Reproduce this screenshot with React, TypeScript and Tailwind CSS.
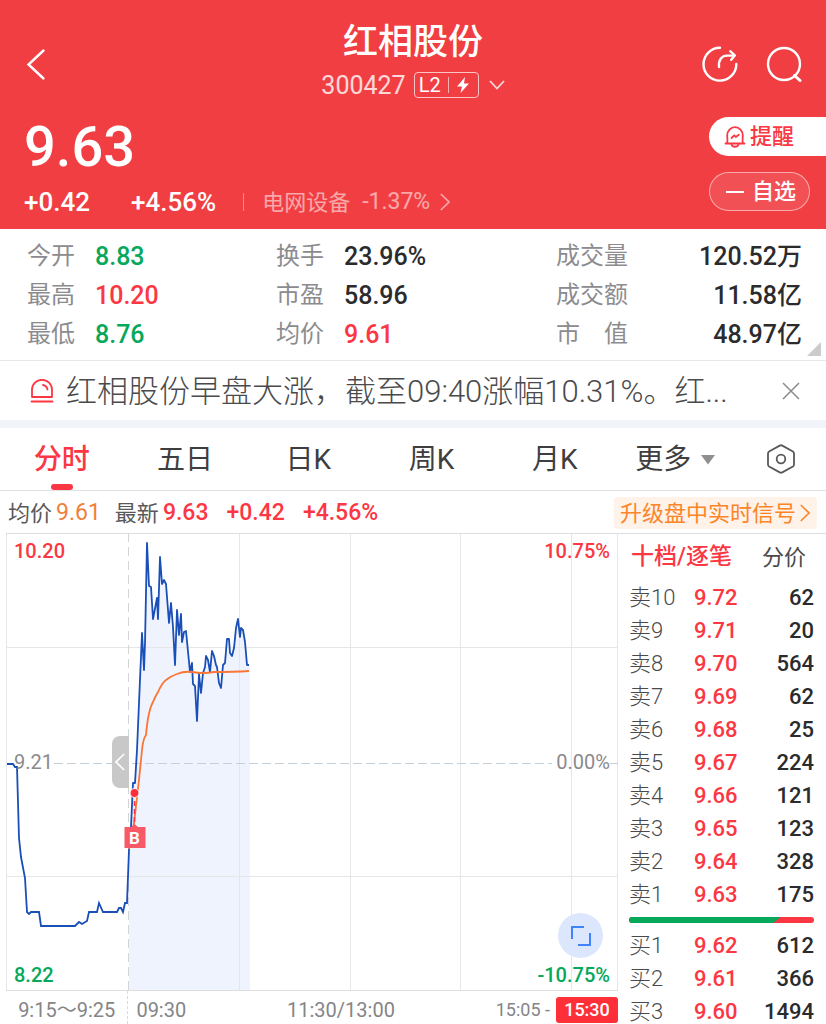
import clsx from "clsx";

const RED = "text-[#fb3744]";
const GREEN = "text-[#06a85b]";
const DARK = "text-[#2b2b2d]";

const stats = [
  [
    { label: "今开", value: "8.83", color: GREEN },
    { label: "最高", value: "10.20", color: RED },
    { label: "最低", value: "8.76", color: GREEN },
  ],
  [
    { label: "换手", value: "23.96%", color: DARK },
    { label: "市盈", value: "58.96", color: DARK },
    { label: "均价", value: "9.61", color: RED },
  ],
  [
    { label: "成交量", value: "120.52万", color: DARK },
    { label: "成交额", value: "11.58亿", color: DARK },
    { label: "市　值", value: "48.97亿", color: DARK },
  ],
];

const tabs = ["分时", "五日", "日K", "周K", "月K"];

const sells = [
  ["卖10", "9.72", "62"],
  ["卖9", "9.71", "20"],
  ["卖8", "9.70", "564"],
  ["卖7", "9.69", "62"],
  ["卖6", "9.68", "25"],
  ["卖5", "9.67", "224"],
  ["卖4", "9.66", "121"],
  ["卖3", "9.65", "123"],
  ["卖2", "9.64", "328"],
  ["卖1", "9.63", "175"],
];

const buys = [
  ["买1", "9.62", "612"],
  ["买2", "9.61", "366"],
  ["买3", "9.60", "1494"],
];

// Call auction, 9:15 - 9:25
const auction =
  "1,231 7,231 9,234 11,234 13,305 15,324 19,345 21,379 23,381 25,379 33,379 35,393 69,393 73,389 76,391 81,388 83,379 91,379 93,370 97,379 111,379 113,375 115,375 117,379 119,370 121,370 123,317";

// Continuous trading from 9:30
const session =
  "123,317 125,294 127,250 129,250 131,217 136,100 138,137 139,110 141,10 143,53 145,54 147,86 151,65 152,86 154,24 156,51 158,47 160,51 163,90 165,70 167,94 169,132 171,77 173,102 175,81 176,109 178,99 180,98 184,139 186,130 187,151 189,153 191,188 193,141 195,160 197,140 199,134 200,123 202,127 204,139 206,118 208,123 210,132 211,134 213,150 215,155 217,132 219,130 221,106 223,106 224,120 226,123 228,115 230,95 232,86 234,104 235,95 237,97 239,109 241,132 243,132";

const average =
  "M123 316 L128 290 L133 247 L136 217 Q137 206 140 202 Q142 178 147 169 Q149 164 152 159 Q156 150 160 147 Q165 143 171 141 Q178 138 186 139 Q197 141 208 139 Q228 139 243 138";

function Arrow({ className }: { className?: string }) {
  return (
    <svg viewBox="0 0 10 18" className={clsx("h-[18px] w-[10px]", className)} fill="none" stroke="currentColor" strokeWidth="1.6">
      <path d="M0.8 1 L9 9 L0.8 17" />
    </svg>
  );
}

function Header() {
  return (
    <header className="bg-[#f03e42] pb-3 text-white">
      <div className="grid grid-cols-[1fr_auto_1fr] items-center px-6 pt-[18px]">
        <button type="button" aria-label="返回" className="justify-self-start pt-3">
          <svg viewBox="0 0 24 36" className="h-9 w-6" fill="none" stroke="currentColor" strokeWidth="2.4" strokeLinecap="round">
            <path d="M19.5 4.5 L4.5 18.5 L19.5 32.5" />
          </svg>
        </button>
        <div className="flex flex-col items-center">
          <h1 className="text-[35px] leading-[50px] font-medium">红相股份</h1>
          <div className="mt-1 flex h-[26px] items-center">
            <span className="pt-[2px] text-[25px] text-white/80">300427</span>
            <span className="ml-2 flex h-[26px] items-center rounded-[4px] border border-white/70 px-1 text-[20px] leading-none">
              L2
              <span className="mx-[7px] h-4 w-px bg-white/60" />
              <svg viewBox="0 0 14 18" className="mr-1 h-[18px] w-[14px]" fill="currentColor">
                <path d="M9 1 L1 10.5 H6 L4.5 17 L13 7.5 H8 Z" />
              </svg>
            </span>
            <svg viewBox="0 0 16 10" className="ml-[10px] h-[10px] w-4" fill="none" stroke="currentColor" strokeOpacity="0.8" strokeWidth="1.8">
              <path d="M1 1 L8 8.5 L15 1" />
            </svg>
          </div>
        </div>
        <div className="flex gap-7 justify-self-end pt-3">
          <button type="button" aria-label="分享">
            <svg viewBox="0 0 36 36" className="h-9 w-9" fill="none" stroke="currentColor" strokeWidth="2.4" strokeLinecap="round" strokeLinejoin="round">
              <path d="M18 1.8 A16.4 16.4 0 1 0 34.3 18" />
              <path d="M17 21 C16.3 13.5 20 9.6 25 9.6 H32" />
              <path d="M28.2 5.2 L32.8 9.4 L29.2 13.8" />
            </svg>
          </button>
          <button type="button" aria-label="搜索">
            <svg viewBox="0 0 36 36" className="h-9 w-9" fill="none" stroke="currentColor" strokeWidth="2.4" strokeLinecap="round">
              <circle cx="18" cy="18" r="16" />
              <path d="M28.5 29.5 L34 34.5" strokeWidth="3" />
            </svg>
          </button>
        </div>
      </div>

      <div className="mt-[19px] flex justify-between">
        <div className="pl-6">
          <p className="text-[56px] leading-[60px] font-medium">9.63</p>
          <div className="mt-[10px] flex h-[30px] items-center text-[26px]">
            <span className="font-medium">+0.42</span>
            <span className="ml-[41px] font-medium">+4.56%</span>
            <span className="ml-[27px] h-[18px] w-px bg-white/40" />
            <a href="#sector" className="ml-[18px] flex items-center text-[22px] text-white/55">
              电网设备
              <span className="ml-3 text-[23px]">-1.37%</span>
              <Arrow className="ml-[10px]" />
            </a>
          </div>
        </div>
        <div className="flex flex-col gap-4">
          <button type="button" className={clsx("flex h-[39px] items-center rounded-l-full bg-white pr-[31px] pl-[15px] text-[22px] font-medium", RED)}>
            <svg viewBox="0 0 22 22" className="mr-1 h-[22px] w-[22px]" fill="none" stroke="currentColor" strokeWidth="1.8" strokeLinecap="round" strokeLinejoin="round">
              <path d="M1.5 17.5 H20.5" />
              <path d="M3 17 C4 15.5 3.2 12 3.2 9.5 A7.8 8.3 0 0 1 18.8 9.5 C18.8 12 18 15.5 19 17" />
              <path d="M7.5 18.5 C8.5 21.5 13.5 21.5 14.5 18.5" />
              <path d="M7.5 12 L10.3 9.3 L11.8 11 L14.8 8.8" />
            </svg>
            提醒
          </button>
          <button type="button" className="mr-4 flex h-[39px] items-center rounded-full border border-white/50 bg-white/10 px-[13px] text-[22px] font-medium">
            <span className="mr-2 ml-[3px] h-[2px] w-[18px] bg-white" />
            自选
          </button>
        </div>
      </div>
    </header>
  );
}

function Stats() {
  return (
    <section className="relative grid grid-cols-[249fr_280fr_246fr] border-b border-[#e8e8ea] py-[7px] pr-6 pl-[27px]">
      {stats.map((column, i) => (
        <dl key={column[0].label}>
          {column.map((item) => (
            <div key={item.label} className={clsx("flex h-[39px] items-center", i === 2 && "justify-between")}>
              <dt className={clsx("text-[24px] text-[#8c8c8f]", i < 2 && "mr-5")}>{item.label}</dt>
              <dd className={clsx("pt-[2px] text-[25px] font-medium", item.color)}>{item.value}</dd>
            </div>
          ))}
        </dl>
      ))}
      <svg viewBox="0 0 14 14" className="absolute right-[5px] bottom-1 h-[14px] w-[14px]" fill="#cbcbcd">
        <path d="M14 0 V14 H0 Z" />
      </svg>
    </section>
  );
}

function News() {
  return (
    <section className="flex h-[59px] shrink-0 items-center pr-[26px] pl-[30px]">
      <svg viewBox="0 0 24 24" className="h-6 w-6 shrink-0" fill="none" stroke="#fb3744" strokeWidth="1.8" strokeLinecap="round">
        <path d="M2 18 V10.5 A9.8 9.5 0 0 1 22 10.5 V18 Z" strokeLinejoin="round" />
        <path d="M1.5 22.5 H22.5" />
        <path d="M13 6 C15.5 6.5 17 8 17.5 10.5" />
      </svg>
      <p className="ml-3 min-w-0 flex-1 truncate pt-1 text-[31px] font-light text-[#4a4a4c]">
        红相股份早盘大涨，截至09:40涨幅10.31%。红...
      </p>
      <button type="button" aria-label="关闭">
        <svg viewBox="0 0 18 18" className="h-[18px] w-[18px]" fill="none" stroke="#8a8a8c" strokeWidth="1.5">
          <path d="M1 1 L17 17 M17 1 L1 17" />
        </svg>
      </button>
    </section>
  );
}

function Tabs() {
  return (
    <nav className="grid h-[63px] shrink-0 grid-cols-[repeat(6,3fr)_2fr] border-b border-[#e2e2e4] pr-1 text-[28px] text-[#3e3e40]">
      {tabs.map((tab, i) => (
        <button
          key={tab}
          type="button"
          className={clsx("relative flex items-center justify-center pt-[2px]", i === 0 ? ["font-medium", RED] : "font-normal")}
        >
          {tab}
          {i === 0 && <span className="absolute bottom-0 h-[6px] w-[22px] rounded-full bg-[#fb3744]" />}
        </button>
      ))}
      <button type="button" className="flex items-center justify-center pt-[2px] pr-[6px]">
        更多
        <svg viewBox="0 0 14 10" className="ml-[10px] h-[10px] w-[14px]" fill="#8f8f91">
          <path d="M0 0 H14 L7 9.5 Z" />
        </svg>
      </button>
      <button type="button" aria-label="设置" className="flex items-center justify-center">
        <svg viewBox="0 0 30 30" className="h-[30px] w-[30px]" fill="none" stroke="#59595b" strokeWidth="1.8" strokeLinejoin="round">
          <path d="M13.7 1.6 Q15 0.9 16.3 1.6 L26.9 7.5 Q28 8.2 28 9.5 V20.5 Q28 21.8 26.9 22.5 L16.3 28.4 Q15 29.1 13.7 28.4 L3.1 22.5 Q2 21.8 2 20.5 V9.5 Q2 8.2 3.1 7.5 Z" />
          <circle cx="15" cy="15" r="4.3" />
        </svg>
      </button>
    </nav>
  );
}

function Summary() {
  return (
    <div className="flex h-[42px] shrink-0 items-center pt-[2px] pr-[9px] pl-2 text-[23px]">
      <span className="text-[22px] text-[#59595b]">均价</span>
      <span className="ml-1 text-[#f0803c]">9.61</span>
      <span className="ml-[14px] text-[22px] text-[#59595b]">最新</span>
      <span className={clsx("ml-1 font-medium", RED)}>9.63</span>
      <span className={clsx("ml-[18px] font-medium", RED)}>+0.42</span>
      <span className={clsx("ml-[18px] font-medium", RED)}>+4.56%</span>
      <a href="#signal" className="ml-auto flex h-8 items-center rounded-[4px] bg-[#fff2e9] pr-[7px] pl-[6px] text-[22px] text-[#fb8528]">
        升级盘中实时信号
        <Arrow className="ml-1" />
      </a>
    </div>
  );
}

function Chart() {
  return (
    <div className="ml-[6px] flex min-w-0 flex-1 flex-col">
      <div className="relative min-h-0 flex-1 text-[20px] leading-6 font-medium">
        <svg viewBox="0 0 612 458" preserveAspectRatio="none" className="absolute inset-0 h-full w-full" fill="none">
          <polygon points={`123,458 ${session} 244,132 244,458`} fill="#eef3fe" />
          <path d="M0.5 0 V458 M233.5 0 V458 M344.5 0 V458 M454.5 0 V458 M565.5 0 V458 M611.5 0 V458" stroke="#e6e6e9" />
          <path d="M0 114.5 H612 M0 343.5 H612" stroke="#e6e6e9" />
          <path d="M0 0.5 H612 M0 457.5 H612" stroke="#dedee0" />
          <path d="M122.5 0 V458" stroke="#d3d4d6" strokeDasharray="9 5" />
          <path d="M48 230.5 H546 M604 230.5 H612" stroke="#c5cfd7" strokeDasharray="9 4" />
          <polyline points={auction} stroke="#1a4fb8" strokeWidth="1.8" />
          <polyline points={session} stroke="#1a4fb8" strokeWidth="1.8" strokeLinejoin="round" />
          <path d={average} stroke="#fb7536" strokeWidth="1.8" />
          <path d="M128.5 260 V294" stroke="#fb3744" strokeWidth="1.5" strokeDasharray="5 3" />
          <circle cx="128.5" cy="260" r="4.5" fill="#fb2f3c" stroke="#fff" />
          <path d="M124 295 L128.5 291 L133 295 Z" fill="#f75a66" />
        </svg>
        <span className="absolute top-[64.2%] left-[21%] flex h-[21px] w-[21px] -translate-x-1/2 items-center justify-center bg-[#f75a66] text-[17px] font-bold text-white">
          B
        </span>
        <button type="button" aria-label="收起" className="absolute top-1/2 left-[17.3%] flex h-[52px] w-[17px] -translate-y-1/2 items-center justify-center rounded-l-[8px] bg-[#c8c8c9] text-white">
          <Arrow className="rotate-180" />
        </button>
        <span className={clsx("absolute top-[6px] left-2", RED)}>10.20</span>
        <span className={clsx("absolute top-[6px] right-2", RED)}>10.75%</span>
        <span className="absolute top-1/2 left-2 -translate-y-1/2 font-normal text-[#8a8a8c]">9.21</span>
        <span className="absolute top-1/2 right-2 -translate-y-1/2 font-normal text-[#8a8a8c]">0.00%</span>
        <span className={clsx("absolute bottom-1 left-2", GREEN)}>8.22</span>
        <span className={clsx("absolute right-2 bottom-1", GREEN)}>-10.75%</span>
        <button type="button" aria-label="全屏" className="absolute right-[15px] bottom-[33px] flex h-[45px] w-[45px] items-center justify-center rounded-full bg-[#dce7fd]">
          <svg viewBox="0 0 20 20" className="h-5 w-5" fill="none" stroke="#3f84fb" strokeWidth="2">
            <path d="M1 13 V1 H13 M19 7 V19 H7" />
          </svg>
        </button>
      </div>
      <div className="flex h-[33px] shrink-0 text-[20px] text-[#858587]">
        <span className="flex w-1/5 items-center justify-center border-r border-dashed border-[#d9dadc] pt-1">
          9:15～9:25
        </span>
        <div className="flex flex-1 items-center justify-between pt-1 pl-2">
          <span>09:30</span>
          <span>11:30/13:00</span>
          <span className="flex items-center text-[18px]">
            15:05 -
            <span className="ml-[6px] flex h-[26px] w-[62px] items-center justify-center rounded-[3px] bg-[#fe2f38] font-medium text-white">
              15:30
            </span>
          </span>
        </div>
      </div>
    </div>
  );
}

function Orders({ rows }: { rows: string[][] }) {
  return (
    <table className="w-full table-fixed">
      <tbody>
        {rows.map(([label, price, volume]) => (
          <tr key={label} className="h-[33px] text-[22px] leading-[33px]">
            <th scope="row" className="w-[65px] p-0 text-left font-light text-[#4a4a4c]">{label}</th>
            <td className={clsx("p-0 font-medium", RED)}>{price}</td>
            <td className={clsx("p-0 text-right font-medium", DARK)}>{volume}</td>
          </tr>
        ))}
      </tbody>
    </table>
  );
}

function OrderBook() {
  return (
    <aside className="w-[208px] shrink-0 border-t border-[#dedee0] pr-3 pl-[11px]">
      <div className="flex h-[47px] items-center justify-between pr-2 pl-[2px]">
        <button type="button" className={clsx("text-[23px] font-medium", RED)}>十档/逐笔</button>
        <button type="button" className="text-[22px] text-[#4a4a4c]">分价</button>
      </div>
      <Orders rows={sells} />
      <div className="my-[6px] flex h-[6px] overflow-hidden rounded-full bg-[#fb3744]">
        <span className="w-[82%] bg-[#06a85b] [clip-path:polygon(0_0,100%_0,95%_100%,0_100%)]" />
      </div>
      <Orders rows={buys} />
    </aside>
  );
}

export default function App() {
  return (
    <main className="flex h-screen flex-col overflow-hidden bg-white [font-family:Roboto,'Noto_Sans_CJK_SC',sans-serif]">
      <Header />
      <Stats />
      <News />
      <div className="h-2 shrink-0 bg-[#f1f4f9]" />
      <Tabs />
      <Summary />
      <div className="flex min-h-0 flex-1">
        <Chart />
        <OrderBook />
      </div>
    </main>
  );
}
